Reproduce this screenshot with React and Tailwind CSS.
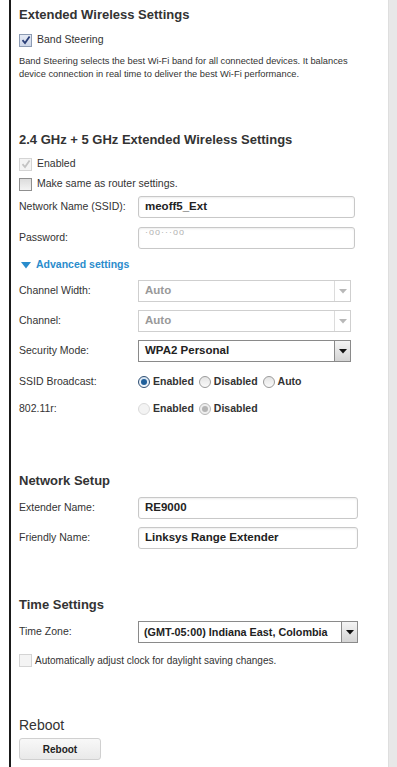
// App.jsx — extender settings panel
import React from 'react'

const FONT = { fontFamily: '"Liberation Sans", Arial, sans-serif' }

// ─── Small controls ──────────────────────────────────────────────────────────
function Check({ checked, disabled }) {
  const box = disabled
    ? 'border-[#d4d4d4] bg-[#f4f4f4]'
    : checked
      ? 'border-[#8c9bb3] bg-gradient-to-b from-[#e6ebf5] to-[#cdd6e8]'
      : 'border-[#8f8f8f] bg-gradient-to-b from-[#dcdcdc] to-[#f3f3f3]'
  const mark = disabled ? '#c4c4c4' : '#2b3f78'
  return (
    <span className={`w-[13px] h-[13px] border ${box} flex items-center justify-center shrink-0`}>
      {checked && (
        <svg width="10" height="10" viewBox="0 0 10 10">
          <path d="M1.5 5.2 L4 8 L8.6 1.4" fill="none" stroke={mark} strokeWidth="1.8" />
        </svg>
      )}
    </span>
  )
}

function Radio({ checked, disabled, label }) {
  let ring = 'border-[#9a9a9a] bg-gradient-to-b from-[#e4e4e4] to-[#fafafa]'
  if (disabled) ring = 'border-[#dadada] bg-[#f3f3f3]'
  if (checked && !disabled) ring = 'border-[#2f4f73] bg-gradient-to-b from-[#d6e4f2] to-[#f4f8fc]'
  if (checked && disabled) ring = 'border-[#b8b8b8] bg-[#eeeeee]'
  return (
    <span className="flex items-center gap-[3px]">
      <span className={`w-[12px] h-[12px] rounded-full border ${ring} flex items-center justify-center`}>
        {checked && (
          <span className={`w-[6px] h-[6px] rounded-full ${disabled ? 'bg-[#b4b4b4]' : 'bg-[#1f5f9a]'}`} />
        )}
      </span>
      <span className="text-[10.5px] font-bold text-[#333]">{label}</span>
    </span>
  )
}

function TextBox({ value, w = 'w-[217px]', faint }) {
  return (
    <div className={`${w} h-[22px] border border-[#c8c8c8] rounded-[3px] bg-white shadow-[inset_0_1px_2px_rgba(0,0,0,0.08)] flex ${faint ? 'items-start' : 'items-center'} px-[6px]`}>
      {faint
        ? <span className="text-[9px] leading-[8px] text-[#b5b5b5] tracking-[1px]">·oo···oo</span>
        : <span className="text-[11.5px] font-bold text-[#222]">{value}</span>}
    </div>
  )
}

function Select({ value, disabled, w = 'w-[213px]', small }) {
  return (
    <div className={`${w} h-[22px] border ${disabled ? 'border-[#cfcfcf]' : 'border-[#8a8a8a]'} bg-white flex items-center`}>
      <span className={`flex-1 ${small ? 'pl-[5px] text-[10.8px]' : 'px-[6px] text-[11.5px]'} font-bold whitespace-nowrap overflow-hidden ${disabled ? 'text-[#999]' : 'text-[#222]'}`}>
        {value}
      </span>
      <span className={`w-[16px] h-[20px] shrink-0 border-l ${disabled ? 'border-[#dcdcdc] bg-white' : 'border-[#8a8a8a] bg-gradient-to-b from-[#f4f4f4] to-[#d4d4d4]'} flex items-center justify-center`}>
        <svg width="8" height="5" viewBox="0 0 8 5">
          <path d="M0 0 H8 L4 4.5 Z" fill={disabled ? '#b8b8b8' : '#111'} />
        </svg>
      </span>
    </div>
  )
}

function Row({ label, children, h = 'h-[22px]', mt }) {
  return (
    <div className={`flex items-center ${h} ${mt}`}>
      <span className="w-[119px] shrink-0 text-[10.5px] text-[#333]">{label}</span>
      {children}
    </div>
  )
}

function Heading({ children, mt, bold = true }) {
  return (
    <h2 className={`h-[18px] flex items-center text-[13px] ${bold ? 'font-bold' : 'font-normal text-[14px]'} text-[#333] ${mt}`}>
      {children}
    </h2>
  )
}

// ─── Page ────────────────────────────────────────────────────────────────────
export default function App() {
  return (
    <div className="flex w-[397px] h-[767px] bg-white overflow-hidden" style={FONT}>
      <div className="w-[9px] shrink-0" />
      <div className="w-[2px] shrink-0 bg-[#1a1a1a]" />

      <main className="flex-1 pl-[8px] pt-[6px]">
        {/* Extended Wireless */}
        <Heading>Extended Wireless Settings</Heading>
        <label className="flex items-center gap-[5px] h-[16px] mt-[8px]">
          <Check checked />
          <span className="text-[10.5px] text-[#333]">Band Steering</span>
        </label>
        <p className="mt-[7px] text-[9.3px] leading-[13px] text-[#333] w-[345px]">
          Band Steering selects the best Wi-Fi band for all connected devices. It balances device connection in real time to deliver the best Wi-Fi performance.
        </p>

        {/* 2.4 + 5 GHz */}
        <Heading mt="mt-[50px]">2.4 GHz + 5 GHz Extended Wireless Settings</Heading>
        <label className="flex items-center gap-[5px] h-[16px] mt-[7px]">
          <Check checked disabled />
          <span className="text-[10.5px] text-[#333]">Enabled</span>
        </label>
        <label className="flex items-center gap-[5px] h-[16px] mt-[4px]">
          <Check />
          <span className="text-[10.5px] text-[#333]">Make same as router settings.</span>
        </label>
        <Row label="Network Name (SSID):" mt="mt-[4px]"><TextBox value="meoff5_Ext" /></Row>
        <Row label="Password:" mt="mt-[9px]"><TextBox faint /></Row>

        <div className="flex items-center gap-[5px] h-[16px] mt-[8px] pl-[2px]">
          <svg width="10" height="7" viewBox="0 0 10 7">
            <path d="M0 0 H10 L5 6.5 Z" fill="#2a8ccc" />
          </svg>
          <span className="text-[10.5px] font-bold text-[#2a8ccc]">Advanced settings</span>
        </div>

        <Row label="Channel Width:" mt="mt-[7px]"><Select value="Auto" disabled /></Row>
        <Row label="Channel:" mt="mt-[8px]"><Select value="Auto" disabled /></Row>
        <Row label="Security Mode:" mt="mt-[8px]"><Select value="WPA2 Personal" /></Row>
        <Row label="SSID Broadcast:" h="h-[16px]" mt="mt-[12px]">
          <div className="flex items-center gap-[5px]">
            <Radio checked label="Enabled" />
            <Radio label="Disabled" />
            <Radio label="Auto" />
          </div>
        </Row>
        <Row label="802.11r:" h="h-[16px]" mt="mt-[11px]">
          <div className="flex items-center gap-[5px]">
            <Radio disabled label="Enabled" />
            <Radio checked disabled label="Disabled" />
          </div>
        </Row>

        {/* Network Setup */}
        <Heading mt="mt-[55px]">Network Setup</Heading>
        <Row label="Extender Name:" mt="mt-[7px]"><TextBox value="RE9000" w="w-[220px]" /></Row>
        <Row label="Friendly Name:" mt="mt-[8px]"><TextBox value="Linksys Range Extender" w="w-[220px]" /></Row>

        {/* Time */}
        <Heading mt="mt-[47px]">Time Settings</Heading>
        <Row label="Time Zone:" mt="mt-[7px]">
          <Select value="(GMT-05:00) Indiana East, Colombia" w="w-[220px]" small />
        </Row>
        <label className="flex items-center gap-[3px] h-[16px] mt-[9px]">
          <Check disabled />
          <span className="text-[10px] text-[#333]">Automatically adjust clock for daylight saving changes.</span>
        </label>

        {/* Reboot */}
        <Heading mt="mt-[48px]" bold={false}>Reboot</Heading>
        <button className="mt-[4px] w-[82px] h-[22px] border border-[#d0d0d0] rounded-[3px] bg-gradient-to-b from-[#f8f8f8] to-[#e9e9e9] text-[10px] font-bold text-[#222]">
          Reboot
        </button>
      </main>

      <div className="w-[9px] shrink-0 bg-[#e8e8e8] border-l border-[#dedede]" />
    </div>
  )
}
